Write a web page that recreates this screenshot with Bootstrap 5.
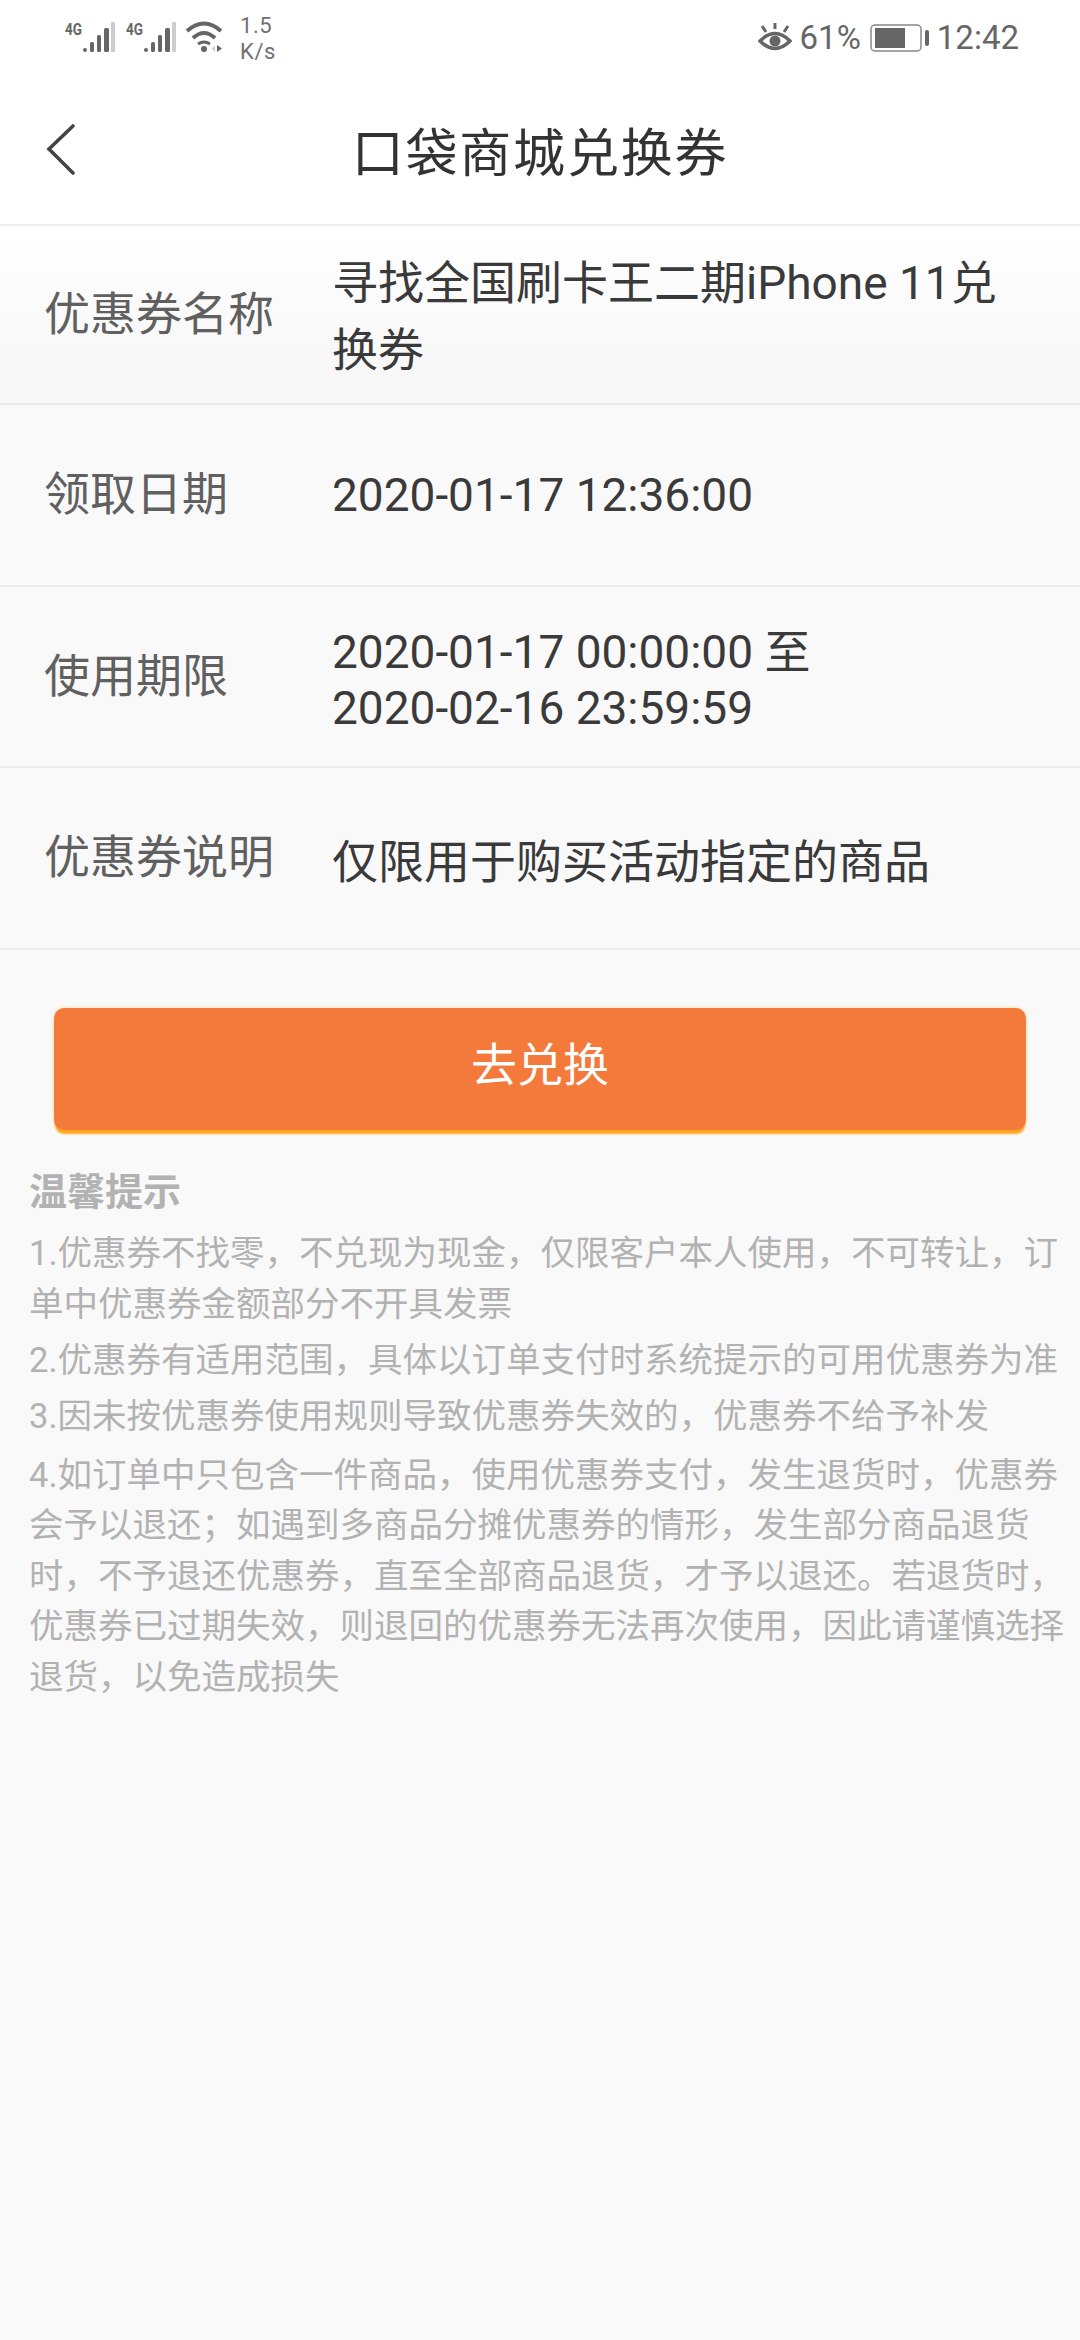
<!DOCTYPE html>
<html lang="zh">
<head>
    <meta charset="UTF-8">
    <meta name="viewport" content="width=device-width, initial-scale=1.0">
    <title>口袋商城兑换券</title>
    <link href="https://cdn.jsdelivr.net/npm/bootstrap@5.3.0/dist/css/bootstrap.min.css" rel="stylesheet">
    <style>
        body { background-color: #f9f9f9; color: #333; font-family: Roboto, "Noto Sans CJK SC", sans-serif; width: 1080px; height: 2340px; overflow: hidden; position: relative; }
        .top-wrap { background-color: #fff; height: 226px; border-bottom: 2px solid #ececec; }
        .status-bar { height: 76px; padding: 0 61px 0 65px; color: #666; }
        .net-speed { font-size: 22px; line-height: 26px; margin-left: 18px; padding-top: 2px; letter-spacing: .6px; color: #707070; }
        .status-right { font-size: 33px; }
        .title-bar { height: 148px; padding-top: 10px; }
        .back-btn { position: absolute; left: 45px; top: 47px; }
        .page-title { font-size: 52px; color: #333; letter-spacing: 1.8px; }
        .info-row { height: 181.5px; border-bottom: 2px solid #ebebeb; }
        .first-row { background: linear-gradient(#fff, #f8f8f8 70%); height: 179px; }
        .row-label { width: 332px; padding-left: 44px; font-size: 46px; color: #606060; flex-shrink: 0; }
        .row-value { font-size: 46px; line-height: 56px; color: #3a3a3a; padding-right: 60px; }
        .first-row .row-value { line-height: 67px; }
        .go-btn { display: block; width: 972px; height: 122px; margin: 58px auto 0; padding: 0 0 6px; background-color: #f37a3b; border: 0; border-radius: 10px; color: #fff; font-size: 46px; box-shadow: 0 5px 2px -1px #ffa51c, 0 0 4px #fbdcb0; }
        .go-btn:hover { background-color: #f37a3b; color: #fff; }
        .tips-box { padding: 36px 8px 0 29px; color: #b2b2b2; font-size: 34.5px; }
        .tips-head { font-size: 38px; font-weight: 700; line-height: 52px; margin-bottom: 10px; }
        .tips-box p { margin: 0 0 5px; line-height: 51px; }
        .tips-box p:last-child { margin-top: 8px; line-height: 50.5px; }
        .wm-text { position: absolute; font-size: 46px; line-height: 1; color: rgba(0,0,0,.018); white-space: nowrap; pointer-events: none; }
        .wm-top { left: 645px; top: 228px; }
        .wm-bottom { left: 640px; top: 2150px; }
        .wm-left { left: 44px; top: 235px; writing-mode: vertical-rl; }
        .wm-right { left: 1000px; top: 950px; writing-mode: vertical-rl; }
    </style>
</head>
<body class="m-0">
    <div class="top-wrap">
        <div class="status-bar d-flex align-items-center justify-content-between">
            <div class="d-flex align-items-center">
                <!-- coords in the viewBox are page pixels, easier to line up with the screenshot -->
                <svg width="157" height="46" viewBox="65 15 157 46" fill="#666">
                    <text x="65" y="35" font-family="Roboto" font-weight="700" font-size="16" textLength="17" lengthAdjust="spacingAndGlyphs">4G</text>
                    <rect x="83" y="48" width="4" height="4" rx="2"/><rect x="90" y="42" width="4" height="10" rx="1.5"/><rect x="97" y="35" width="4" height="17" rx="1.5"/><rect x="104" y="28" width="5" height="24" rx="1.5"/><rect x="111" y="22" width="4" height="30" rx="1" fill="#ccc"/>
                    <text x="126" y="35" font-family="Roboto" font-weight="700" font-size="16" textLength="17" lengthAdjust="spacingAndGlyphs">4G</text>
                    <rect x="144" y="48" width="4" height="4" rx="2"/><rect x="151" y="42" width="4" height="10" rx="1.5"/><rect x="158" y="35" width="4" height="17" rx="1.5"/><rect x="165" y="28" width="5" height="24" rx="1.5"/><rect x="172" y="22" width="4" height="30" rx="1" fill="#ccc"/>
                    <g fill="none" stroke="#666" stroke-width="4">
                        <path d="M187 31 Q204 16 221 31"/><path d="M193 38 Q204 28 215 38"/><path d="M198 44 Q204 40 210 44" stroke-width="3"/>
                    </g>
                    <circle cx="204" cy="49" r="3"/>
                    <path d="M212 48.5L215 45.5V52Z" fill="#ccc"/><path d="M217 45L222 48.5L217 52Z"/>
                </svg>
                <div class="net-speed">1.5<br>K/s</div>
            </div>
            <div class="status-right d-flex align-items-center">
                <svg width="34" height="30" viewBox="0 0 34 30" fill="none" stroke="#666" stroke-width="3.5">
                    <path d="M2 18 Q17 3 32 18 Q17 33 2 18Z"/><circle cx="17" cy="18" r="5.5" fill="#666" stroke="none"/>
                    <path d="M17 0V6M4 3L8 9M30 3L26 9" stroke-width="3"/>
                </svg>
                <span class="ms-2">61%</span>
                <svg class="ms-2" width="60" height="28" viewBox="0 0 60 28" fill="none">
                    <rect x="2" y="1" width="50" height="26" rx="4" stroke="#888" stroke-width="1.5"/>
                    <rect x="6" y="4" width="30" height="20" fill="#666"/>
                    <rect x="56" y="6" width="4" height="16" rx="2" fill="#666"/>
                </svg>
                <span class="ms-2">12:42</span>
            </div>
        </div>
        <div class="title-bar position-relative d-flex align-items-center justify-content-center">
            <svg class="back-btn" width="32" height="54" viewBox="0 0 32 54" fill="none" stroke="#444" stroke-width="3.6" stroke-linecap="round"><path d="M28 3 L4 26 L28 50"/></svg>
            <div class="page-title">口袋商城兑换券</div>
        </div>
    </div>

    <div class="info-row first-row d-flex align-items-center">
        <div class="row-label">优惠券名称</div>
        <div class="row-value pt-1">寻找全国刷卡王二期iPhone 11兑换券</div>
    </div>
    <div class="info-row d-flex align-items-center">
        <div class="row-label">领取日期</div>
        <div class="row-value">2020-01-17 12:36:00</div>
    </div>
    <div class="info-row d-flex align-items-center">
        <div class="row-label">使用期限</div>
        <div class="row-value pt-2">2020-01-17 00:00:00 至<br>2020-02-16 23:59:59</div>
    </div>
    <div class="info-row d-flex align-items-center">
        <div class="row-label">优惠券说明</div>
        <div class="row-value pt-2">仅限用于购买活动指定的商品</div>
    </div>

    <button type="button" class="btn go-btn">去兑换</button>

    <div class="tips-box">
        <div class="tips-head">温馨提示</div>
        <p>1.优惠券不找零，不兑现为现金，仅限客户本人使用，不可转让，订单中优惠券金额部分不开具发票</p>
        <p>2.优惠券有适用范围，具体以订单支付时系统提示的可用优惠券为准</p>
        <p>3.因未按优惠券使用规则导致优惠券失效的，优惠券不给予补发</p>
        <p>4.如订单中只包含一件商品，使用优惠券支付，发生退货时，优惠券会予以退还；如遇到多商品分摊优惠券的情形，发生部分商品退货时，不予退还优惠券，直至全部商品退货，才予以退还。若退货时，优惠券已过期失效，则退回的优惠券无法再次使用，因此请谨慎选择退货，以免造成损失</p>
    </div>

    <!-- faint watermark digits over the page -->
    <div class="wm-text wm-top">49541579256133434</div>
    <div class="wm-text wm-bottom">49541579256133434</div>
    <div class="wm-text wm-left">49541579256133434</div>
    <div class="wm-text wm-right">49541579256133434</div>

    <script src="https://cdn.jsdelivr.net/npm/bootstrap@5.3.0/dist/js/bootstrap.bundle.min.js"></script>
</body>
</html>
